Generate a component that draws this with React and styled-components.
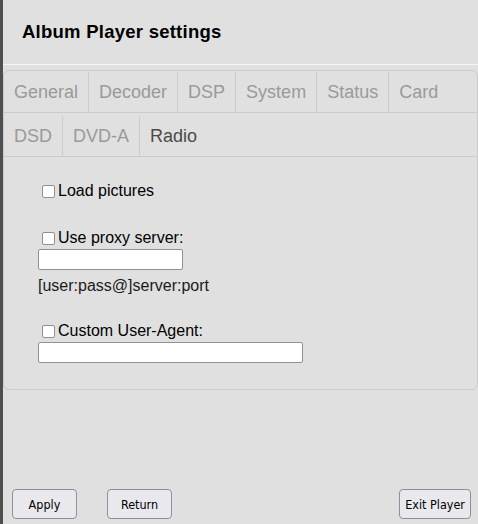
import React from 'react'
import styled, { createGlobalStyle } from 'styled-components'

const GlobalStyle = createGlobalStyle`
  html, body {
    margin: 0;
    padding: 0;
    background: #e0e0e0;
  }
  * { box-sizing: border-box; }
`

const tabRows = [
  ['General', 'Decoder', 'DSP', 'System', 'Status', 'Card'],
  ['DSD', 'DVD-A', 'Radio'],
]

const App = () => {
  return (
    <Page>
      <GlobalStyle />
      <Header>
        <h1>Album Player settings</h1>
      </Header>

      <Panel>
        {tabRows.map((row, i) => (
          <TabRow key={i} $tall={i === 1}>
            {row.map((name) => (
              <Tab key={name} $active={name === 'Radio'} $last={name === 'Card' || name === 'Radio'}>
                {name}
              </Tab>
            ))}
          </TabRow>
        ))}

        <Content>
          <CheckRow>
            <Check />
            Load pictures
          </CheckRow>

          <CheckRow $gap={27}>
            <Check />
            Use proxy server:
          </CheckRow>
          <TextBox $width={145} />
          <Hint>[user:pass@]server:port</Hint>

          <CheckRow $gap={25}>
            <Check />
            Custom User-Agent:
          </CheckRow>
          <TextBox $width={265} />
        </Content>
      </Panel>

      <Footer>
        <Button>Apply</Button>
        <Button>Return</Button>
        <Spacer />
        <Button $auto>Exit Player</Button>
      </Footer>
    </Page>
  )
}

export default App

const Page = styled.div`
  height: 100vh;
  display: flex;
  flex-direction: column;
  background: #e0e0e0;
  border-left: 3px solid #4f4f4f;
  font-family: 'Liberation Sans', Arial, sans-serif;
`

const Header = styled.div`
  height: 65px;
  display: flex;
  align-items: center;
  padding-left: 19px;
  border-bottom: 1px solid #f6f6f6;

  h1{
    margin: 0;
    font-size: 18.5px;
    letter-spacing: 0.25px;
    font-weight: 700;
    color: #000;
    padding-bottom: 1px;
  }
`

const Panel = styled.div`
  margin-top: 5px;
  border: 1px solid #cbcbcb;
  border-radius: 6px;
  background: #e0e0e0;
`

const TabRow = styled.div`
  display: flex;
  height: ${p => p.$tall ? 44 : 42}px;
  padding-top: ${p => p.$tall ? 3 : 1}px;
  border-bottom: 1px solid #cbcbcb;
`

const Tab = styled.div`
  display: flex;
  align-items: center;
  padding: 0 10px;
  font-size: 18px;
  color: ${p => p.$active ? '#4a4a4a' : '#9a9a9a'};
  border-right: ${p => p.$last ? 'none' : '1px solid #cbcbcb'};
`

const Content = styled.div`
  padding: 24px 0 26px 34px;
  display: flex;
  flex-direction: column;
  align-items: flex-start;
`

const CheckRow = styled.label`
  display: flex;
  align-items: center;
  height: 20px;
  margin-top: ${p => p.$gap || 0}px;
  font-size: 16px;
  color: #000;
`

const Check = styled.input.attrs({ type: 'checkbox' })`
  appearance: none;
  width: 13px;
  height: 13px;
  margin: 1px 3px 0 4px;
  background: #fff;
  border: 1.5px solid #8f8f9d;
  border-radius: 2px;
`

const TextBox = styled.input.attrs({ type: 'text' })`
  width: ${p => p.$width}px;
  height: 21px;
  margin-top: 1px;
  background: #fff;
  border: 1px solid #8f8f9d;
  border-radius: 2px;
  padding: 0 4px;
`

const Hint = styled.div`
  margin-top: 6px;
  height: 20px;
  line-height: 20px;
  font-size: 16px;
  color: #1a1a1a;
`

const Footer = styled.div`
  margin-top: auto;
  display: flex;
  align-items: center;
  gap: 30px;
  padding: 0 7px 5px 9px;
`

const Spacer = styled.div`
  flex: 1;
`

const Button = styled.button`
  height: 30px;
  width: ${p => p.$auto ? 'auto' : '65px'};
  padding: 1px 5px 0;
  background: #e9e9ed;
  border: 1px solid #8f8f9d;
  border-radius: 4px;
  font-family: 'DejaVu Sans Condensed', 'DejaVu Sans', sans-serif;
  font-size: 12.5px;
  color: #000;
`
